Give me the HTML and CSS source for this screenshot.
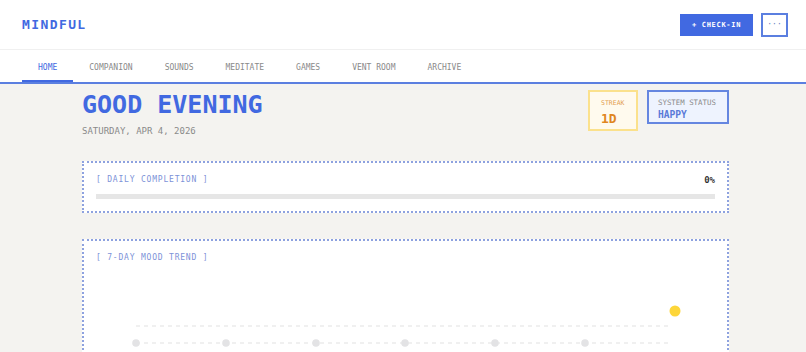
FILE: index.html
```html
<!DOCTYPE html>
<html lang="en">
<head>
    <meta charset="UTF-8">
    <meta name="viewport" content="width=device-width, initial-scale=1.0">
    <title>Mindful</title>
    <link rel="stylesheet" href="styles.css">
</head>
<body>
    <header class="topbar">
        <div class="logo">MINDFUL</div>
        <div class="top-actions">
            <button class="checkin">+ CHECK-IN</button>
            <button class="more">···</button>
        </div>
    </header>

    <nav class="tabs">
        <a class="tab active">HOME</a>
        <a class="tab">COMPANION</a>
        <a class="tab">SOUNDS</a>
        <a class="tab">MEDITATE</a>
        <a class="tab">GAMES</a>
        <a class="tab">VENT ROOM</a>
        <a class="tab">ARCHIVE</a>
    </nav>

    <main class="page">
        <div class="greet-row">
            <div class="greet">
                <h1>GOOD EVENING</h1>
                <div class="date">SATURDAY, APR 4, 2026</div>
            </div>
            <div class="stats">
                <div class="streak">
                    <div class="streak-label">STREAK</div>
                    <div class="streak-value">1D</div>
                </div>
                <div class="status">
                    <div class="status-label">SYSTEM STATUS</div>
                    <div class="status-value">HAPPY</div>
                </div>
            </div>
        </div>

        <section class="card">
            <div class="card-head">
                <span class="card-label">[ DAILY COMPLETION ]</span>
                <span class="pct">0%</span>
            </div>
            <div class="bar"></div>
        </section>

        <section class="card trend">
            <div class="card-head">
                <span class="card-label">[ 7-DAY MOOD TREND ]</span>
            </div>
            <!-- mood chart, one point per day -->
            <svg class="chart" width="619" height="110" viewBox="0 0 619 110">
                <line x1="40" y1="56" x2="574" y2="56" stroke="#e2e2e2" stroke-width="1.2" stroke-dasharray="4 4"/>
                <line x1="40" y1="73" x2="574" y2="73" stroke="#e2e2e2" stroke-width="1.2" stroke-dasharray="4 4"/>
                <circle cx="40" cy="73" r="3.8" fill="#e3e3e5"/>
                <circle cx="130" cy="73" r="3.8" fill="#e3e3e5"/>
                <circle cx="220" cy="73" r="3.8" fill="#e3e3e5"/>
                <circle cx="309" cy="73" r="3.8" fill="#e3e3e5"/>
                <circle cx="399" cy="73" r="3.8" fill="#e3e3e5"/>
                <circle cx="489" cy="73" r="3.8" fill="#e3e3e5"/>
                <circle cx="579" cy="41" r="5.5" fill="#fdd63a"/>
            </svg>
        </section>
    </main>
</body>
</html>
```

FILE: styles.css
```css
body{
    margin: 0;
    background-color: #f4f3f0;
    font-family: "DejaVu Sans Mono", "Liberation Mono", monospace;
    color: #333;
}

.topbar{
    height: 50px;
    background: white;
    border-bottom: 1px solid #f0f0f0;
    display: flex;
    align-items: center;
    justify-content: space-between;
    padding: 0 18px 0 22px;
    box-sizing: border-box;
}
.logo{font-size: 13px; font-weight: bold; letter-spacing: 1.4px; color: #4169e1;}
.top-actions{display: flex; gap: 8px; align-items: center;}
.checkin{
    width: 73px;
    height: 22px;
    border: none;
    background: #4169e1;
    color: white;
    font-family: inherit;
    font-size: 7px;
    font-weight: bold;
    letter-spacing: 0.7px;
    padding: 0;
}
.more{
    width: 27px;
    height: 24px;
    border: 2px solid #5b7fe0;
    background: white;
    color: #6b7fbf;
    font-family: inherit;
    font-size: 8px;
    padding: 0;
}

.tabs{
    height: 32px;
    background: white;
    border-bottom: 2px solid #5b7fe0;
    display: flex;
    padding-left: 22px;
}
.tab{
    padding: 3px 16px 0;
    font-size: 8px;
    color: #8a8a8a;
    line-height: 29px;
}
.tab.active{color: #4169e1; box-shadow: inset 0 -2px 0 #4169e1;}

.page{padding: 6px 77px 0 82px;}
.greet-row{display: flex; justify-content: space-between; align-items: flex-start; margin-bottom: 24px;}
h1{margin: 0; font-size: 25px; line-height: 30px; color: #4169e1;}
.date{margin-top: 5px; font-size: 9px; line-height: 12px; color: #8a8a8a;}

.stats{display: flex; gap: 9px; align-items: flex-start;}
.streak{
    width: 50px;
    height: 41px;
    box-sizing: border-box;
    border: 2px solid #fbe18c;
    background: #fffaee;
    padding: 7px 0 0 11px;
}
.streak-label{font-size: 6.5px; color: #e3a04f; line-height: 9px;}
.streak-value{font-size: 13px; font-weight: bold; color: #e0861f; line-height: 16px; margin-top: 3px;}
.status{
    width: 82px;
    height: 34px;
    box-sizing: border-box;
    border: 2px solid #6586e0;
    background: #eef3fe;
    padding: 6px 0 0 9px;
}
.status-label{font-size: 7.4px; color: #8a8a8a; line-height: 9px;}
.status-value{font-size: 9.6px; font-weight: bold; color: #5a7ad8; line-height: 12px; margin-top: 2px;}

.card{
    background: white;
    border: 2px dotted #8ea2df;
    padding: 12px 12px 12px 12px;
    margin-bottom: 26px;
}
.card-head{display: flex; justify-content: space-between; align-items: center; height: 10px; line-height: 10px;}
.card-label{font-size: 8px; letter-spacing: 0.8px; color: #7d92d8;}
.pct{font-size: 9px; font-weight: bold; color: #333;}
.bar{height: 5px; background: #e6e6e6; margin-top: 9px;}
.trend{padding-bottom: 0;}
.chart{display: block; margin-top: 7px;}
```
